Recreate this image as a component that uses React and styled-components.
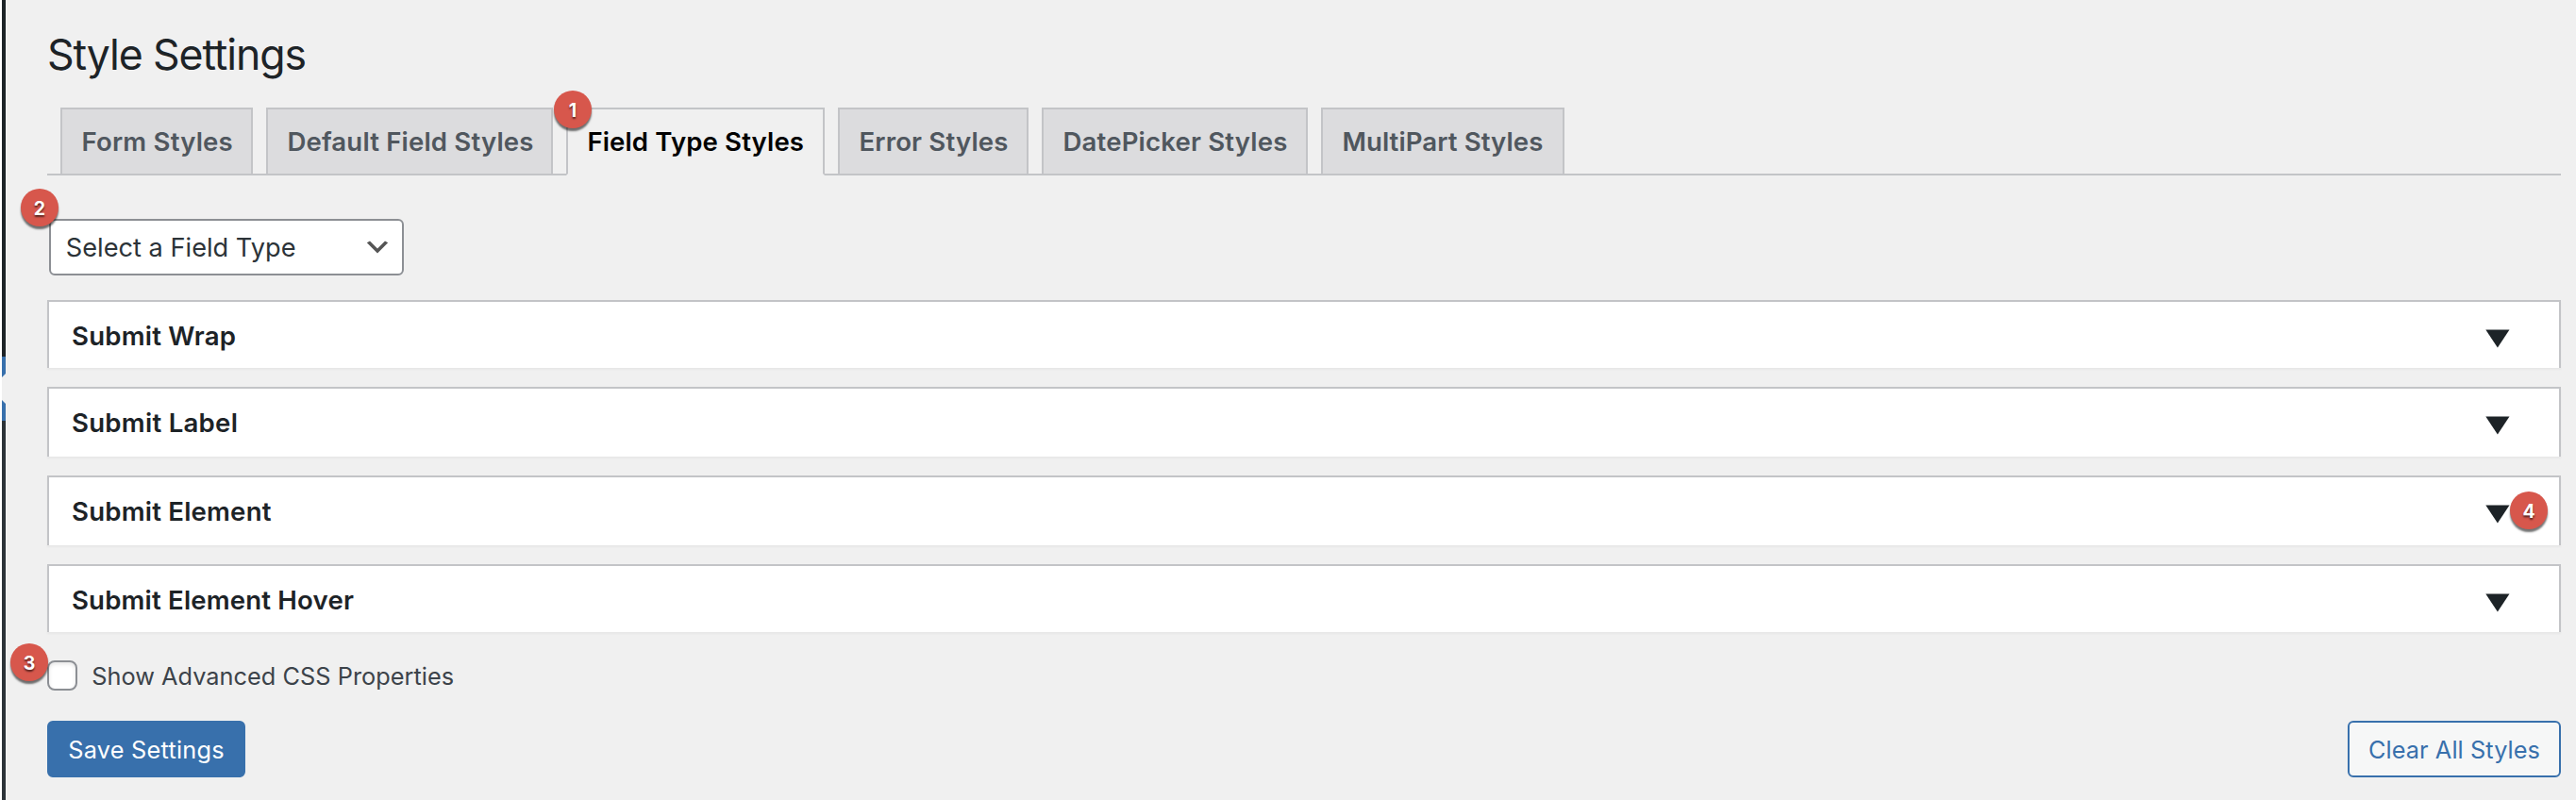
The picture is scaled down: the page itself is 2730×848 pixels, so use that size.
import React from "react";
import styled, { createGlobalStyle } from "styled-components";

const GlobalStyle = createGlobalStyle`
  *, *::before, *::after { box-sizing: border-box; }
  body {
    margin: 0;
    background: #f0f0f0;
    color: #1d2327;
    font-family: Inter, "Liberation Sans", sans-serif;
  }
`;

const Page = styled.div`
  display: flex;
  height: 848px;
  overflow: hidden;
  background: #f0f0f0;
`;

const MenuEdge = styled.svg`
  flex: none;
  width: 6px;
  height: 848px;
`;

const Main = styled.main`
  flex: 1;
  display: flex;
  flex-direction: column;
  align-items: stretch;
  padding: 30px 16px 24px 44px;
`;

const Heading = styled.h1`
  margin: 0 0 28px;
  font-size: 44.6px;
  font-weight: 400;
  line-height: 56px;
  letter-spacing: -1.107px;
`;

const Tabs = styled.nav`
  display: flex;
  gap: 14px;
  height: 72px;
  padding-left: 14px;
  border-bottom: 2px solid #c3c4c7;
`;

const Tab = styled.a`
  position: relative;
  flex: none;
  width: ${(p) => p.$width}px;
  height: ${(p) => (p.$active ? 72 : 70)}px;
  padding-left: 20.4px;
  border: 2px solid #c3c4c7;
  border-bottom: ${(p) => (p.$active ? "2px solid #f0f0f0" : "none")};
  background: ${(p) => (p.$active ? "#f0f0f0" : "#dcdcde")};
  color: ${(p) => (p.$active ? "#000" : "#50575e")};
  font-size: 27.6px;
  font-weight: 600;
  line-height: 68px;
  letter-spacing: ${(p) => p.$spacing}px;
  white-space: nowrap;
`;

const Badge = styled.span`
  position: absolute;
  z-index: 2;
  left: ${(p) => p.$left}px;
  top: ${(p) => p.$top}px;
  width: 40px;
  height: 40px;
  border-radius: 50%;
  background: #d7574c;
  box-shadow: 0 3px 2px rgba(0, 0, 0, 0.55);
  color: #fff;
  font-size: 19.5px;
  font-weight: 700;
  line-height: 42px;
  letter-spacing: 0;
  text-align: center;
  text-shadow: 0 2px 2px rgba(0, 0, 0, 0.6);
`;

const Select = styled.div`
  position: relative;
  display: flex;
  align-items: center;
  justify-content: space-between;
  width: 376px;
  height: 60px;
  margin: 46px 0 26px 2px;
  padding: 0 10px 0 15.8px;
  border: 2px solid #8c8f94;
  border-radius: 6px;
  background: #fff;
  color: #2c3338;
  font-size: 27.2px;
`;

const Chevron = styled.svg`
  width: 32px;
  height: 32px;
`;

const Panels = styled.div`
  display: flex;
  flex-direction: column;
  gap: 20px;
`;

const Panel = styled.section`
  position: relative;
  display: flex;
  align-items: flex-start;
  justify-content: space-between;
  height: ${(p) => p.$height}px;
  padding: 0 52px 0 24px;
  border: 2px solid #c3c4c7;
  border-bottom: none;
  background: #fff;
  box-shadow: 0 2px 2px rgba(0, 0, 0, 0.04);
`;

const PanelTitle = styled.h2`
  margin: 0;
  font-size: 27.6px;
  font-weight: 600;
  line-height: 72px;
  letter-spacing: ${(p) => p.$spacing}px;
`;

const Triangle = styled.svg`
  width: 26px;
  height: 20px;
  margin-top: 29px;
`;

const Option = styled.label`
  position: relative;
  display: flex;
  align-items: center;
  gap: 15.2px;
  height: 32px;
  margin-top: 30px;
  color: #3c434a;
  font-size: 25.3px;
  letter-spacing: 0.036px;
`;

const Checkbox = styled.input`
  appearance: none;
  width: 32px;
  height: 32px;
  margin: 0;
  border: 2px solid #8c8f94;
  border-radius: 8px;
  background: #fff;
  box-shadow: inset 0 2px 4px rgba(0, 0, 0, 0.1);
`;

const Actions = styled.div`
  display: flex;
  justify-content: space-between;
  margin-top: 32px;
`;

const Button = styled.button`
  width: ${(p) => p.$width}px;
  height: 60px;
  padding: 0;
  border: 2px solid #3870ac;
  border-radius: 6px;
  background: ${(p) => (p.$primary ? "#3870ac" : "#f6f7f7")};
  color: ${(p) => (p.$primary ? "#fff" : "#3870ac")};
  font-family: inherit;
  font-size: 25.3px;
  letter-spacing: ${(p) => p.$spacing}px;
`;

const tabs = [
  { label: "Form Styles", width: 204, spacing: 0.19 },
  { label: "Default Field Styles", width: 304, spacing: 0.16 },
  { label: "Field Type Styles", width: 274, spacing: 0.12, active: true },
  { label: "Error Styles", width: 202, spacing: 0.16 },
  { label: "DatePicker Styles", width: 282, spacing: 0.17 },
  { label: "MultiPart Styles", width: 258, spacing: 0.08 },
];

const panels = [
  { title: "Submit Wrap", height: 72, spacing: 0.22 },
  { title: "Submit Label", height: 74, spacing: 0.26 },
  { title: "Submit Element", height: 74, spacing: 0.2, badge: 4 },
  { title: "Submit Element Hover", height: 72, spacing: 0.17 },
];

export default function App() {
  return (
    <Page>
      <GlobalStyle />
      <MenuEdge viewBox="0 0 6 848" aria-hidden="true">
        <rect width="2" height="848" fill="#fff" />
        <rect x="2" width="4" height="378" fill="#1d2327" />
        <path d="M2 378h4v18l-4 4z" fill="#3870ac" />
        <path d="M2 424l4 4v18h-4z" fill="#3870ac" />
        <rect x="2" y="446" width="4" height="402" fill="#2c3338" />
      </MenuEdge>
      <Main>
        <Heading>Style Settings</Heading>
        <Tabs>
          {tabs.map((t) => (
            <Tab key={t.label} $width={t.width} $active={t.active} $spacing={t.spacing}>
              {t.label}
              {t.active && <Badge $left={-15} $top={-20}>1</Badge>}
            </Tab>
          ))}
        </Tabs>
        <Select>
          Select a Field Type
          <Chevron viewBox="0 0 20 20" aria-hidden="true">
            <path d="M5 6l5 5 5-5 2 1-7 7-7-7 2-1z" fill="#555" />
          </Chevron>
          <Badge $left={-32} $top={-34}>2</Badge>
        </Select>
        <Panels>
          {panels.map((p) => (
            <Panel key={p.title} $height={p.height}>
              <PanelTitle $spacing={p.spacing}>{p.title}</PanelTitle>
              <Triangle viewBox="0 0 26 20" aria-hidden="true">
                <path d="M0.3 0.5h25.2L12.9 19.5z" fill="#1d2327" />
              </Triangle>
              {p.badge && <Badge $left={2608} $top={15}>{p.badge}</Badge>}
            </Panel>
          ))}
        </Panels>
        <Option>
          <Checkbox type="checkbox" />
          Show Advanced CSS Properties
          <Badge $left={-39} $top={-18}>3</Badge>
        </Option>
        <Actions>
          <Button $primary $width={210} $spacing={0.237}>Save Settings</Button>
          <Button $width={226} $spacing={0.075}>Clear All Styles</Button>
        </Actions>
      </Main>
    </Page>
  );
}
